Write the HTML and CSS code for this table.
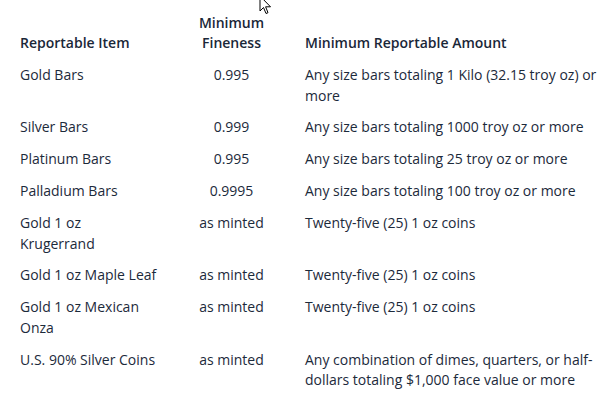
FILE: index.html
```html
<!DOCTYPE html>
<html lang="en">
<head>
<meta charset="utf-8">
<title>Reportable Items</title>
<link rel="stylesheet" href="styles.css">
</head>
<body>
<table class="report">
  <colgroup>
    <col class="c-item">
    <col class="c-fine">
    <col class="c-amount">
  </colgroup>
  <thead>
    <tr>
      <th class="item">Reportable Item</th>
      <th class="fine">Minimum Fineness</th>
      <th class="amount">Minimum Reportable Amount</th>
    </tr>
  </thead>
  <tbody>
    <tr><td>Gold Bars</td><td class="fine">0.995</td><td>Any size bars totaling 1 Kilo (32.15 troy oz) or more</td></tr>
    <tr><td>Silver Bars</td><td class="fine">0.999</td><td>Any size bars totaling 1000 troy oz or more</td></tr>
    <tr><td>Platinum Bars</td><td class="fine">0.995</td><td>Any size bars totaling 25 troy oz or more</td></tr>
    <tr><td>Palladium Bars</td><td class="fine">0.9995</td><td>Any size bars totaling 100 troy oz or more</td></tr>
    <tr><td>Gold 1 oz Krugerrand</td><td class="fine">as minted</td><td>Twenty-five (25) 1 oz coins</td></tr>
    <tr><td>Gold 1 oz Maple Leaf</td><td class="fine">as minted</td><td>Twenty-five (25) 1 oz coins</td></tr>
    <tr><td>Gold 1 oz Mexican Onza</td><td class="fine">as minted</td><td>Twenty-five (25) 1 oz coins</td></tr>
    <tr><td>U.S. 90% Silver Coins</td><td class="fine">as minted</td><td>Any combination of dimes, quarters, or half-dollars totaling $1,000 face value or more</td></tr>
  </tbody>
</table>
<svg class="cursor" width="13" height="21" viewBox="0 0 13 21" aria-hidden="true">
  <path d="M1 1 L1 16 L4.5 12.5 L7 18.5 L9 17.7 L6.6 11.8 L11.5 11.8 Z" fill="#fff" stroke="#000" stroke-width="1" stroke-linejoin="miter"/>
</svg>
</body>
</html>
```
FILE: styles.css
```css
html, body {
  margin: 0;
  padding: 0;
  background: #ffffff;
}
body {
  position: relative;
  width: 610px;
  height: 405px;
  overflow: hidden;
  font-family: "Open Sans", "Noto Sans", sans-serif;
  font-size: 14px;
  color: #1c2a3b;
}
.report {
  border-collapse: collapse;
  table-layout: fixed;
  width: 602px;
  margin: 7px 0 0 8px;
}
.c-item { width: 162px; }
.c-fine { width: 123px; }
.c-amount { width: 317px; }
.report th,
.report td {
  padding: 5.7px 12px;
  line-height: 20.5px;
  text-align: left;
  vertical-align: top;
}
.report th {
  font-weight: 600;
  vertical-align: bottom;
  color: #1a2738;
}
.report .fine {
  text-align: center;
}
.cursor {
  position: absolute;
  left: 259px;
  top: -5px;
}
```
